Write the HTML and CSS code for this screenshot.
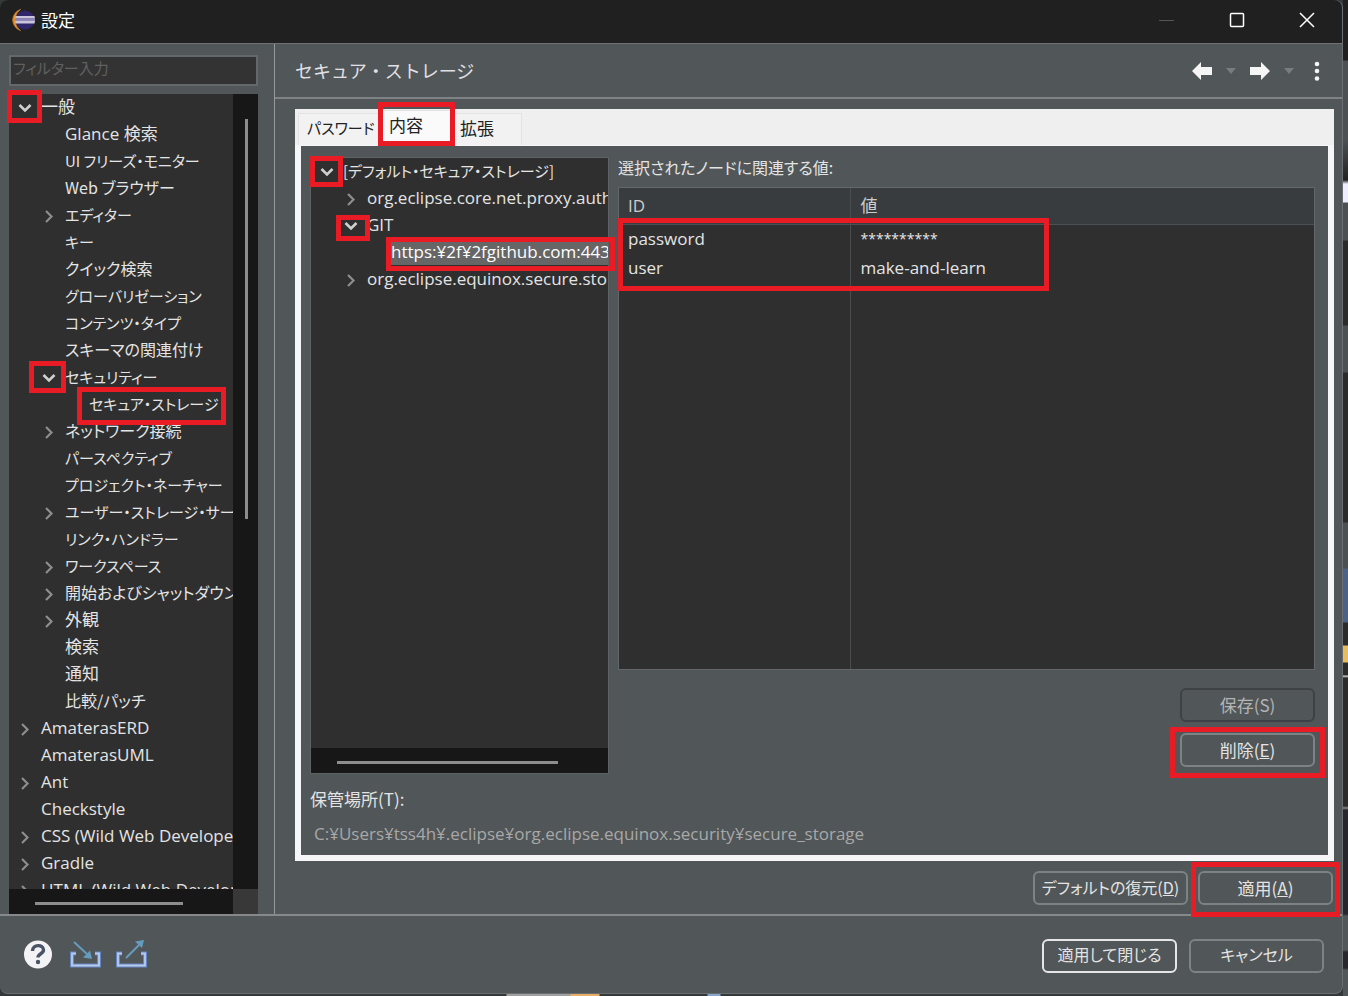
FILE: index.html
```html
<!DOCTYPE html>
<html lang="ja">
<head>
<meta charset="utf-8">
<title>設定</title>
<link rel="stylesheet" href="styles.css">
</head>
<body>
<svg class="defs" aria-hidden="true">
  <symbol id="down" viewBox="0 0 16 16"><path d="M2.500 6 8 11.500l5.500-5.500" fill="none" stroke="#d0d0d0" stroke-width="2.600"/></symbol>
  <symbol id="right" viewBox="0 0 16 16"><path d="M5 4 10.500 9.500 5 15" fill="none" stroke="#8d8d8d" stroke-width="2.200"/></symbol>
</svg>
<div class="dialog">
  <header class="titlebar">
    <svg class="logo" viewBox="0 0 24 24"><path d="M9 1.500A11 11 0 0 0 9 22.500 13 13 0 0 1 9 1.500" fill="#f39a2b" stroke="#b9752c"/><circle cx="13.500" cy="12" r="9.500" fill="#2f2769"/><path d="M4 8h19l.5 2.500H3.500zM3.500 13h20l-.5 2.500H4z" fill="#c9c5dd"/><path d="M3.500 10.500h20V13h-20z" fill="#9089b8"/></svg>
    <h1>設定</h1>
    <div class="winbtns">
      <button aria-label="最小化"><svg viewBox="0 0 16 16"><path d="M0 8.500h15" stroke="#555" fill="none"/></svg></button>
      <button aria-label="最大化"><svg viewBox="0 0 16 16"><rect x="1.500" y="1.500" width="13" height="13" rx="1" stroke="#fff" stroke-width="1.500" fill="none"/></svg></button>
      <button aria-label="閉じる"><svg viewBox="0 0 16 16"><path d="M1 1l14 14M15 1 1 15" stroke="#fff" stroke-width="1.500" fill="none"/></svg></button>
    </div>
  </header>
  <div class="content">
    <aside class="sidebar">
      <input class="filter" type="text" placeholder="フィルター入力" aria-label="フィルター入力">
      <div class="treebox">
        <ul class="tree" role="tree">
          <li><svg><use href="#down"/></svg><span class="lat">一般</span></li>
          <li class="l1"><svg></svg><span class="lat">Glance 検索</span></li>
          <li class="l1"><svg></svg><span class="kana">UI フリーズ・モニター</span></li>
          <li class="l1"><svg></svg>Web ブラウザー</li>
          <li class="l1"><svg><use href="#right"/></svg><span class="kana">エディター</span></li>
          <li class="l1"><svg></svg><span class="kana">キー</span></li>
          <li class="l1"><svg></svg>クイック検索</li>
          <li class="l1"><svg></svg><span class="kana">グローバリゼーション</span></li>
          <li class="l1"><svg></svg><span class="kana">コンテンツ・タイプ</span></li>
          <li class="l1"><svg></svg>スキーマの関連付け</li>
          <li class="l1"><svg><use href="#down"/></svg><span class="kana">セキュリティー</span></li>
          <li class="l2"><svg></svg><span class="kana">セキュア・ストレージ</span></li>
          <li class="l1"><svg><use href="#right"/></svg>ネットワーク接続</li>
          <li class="l1"><svg></svg><span class="kana">パースペクティブ</span></li>
          <li class="l1"><svg></svg><span class="kana">プロジェクト・ネーチャー</span></li>
          <li class="l1"><svg><use href="#right"/></svg><span class="kana">ユーザー・ストレージ・サービス</span></li>
          <li class="l1"><svg></svg><span class="kana">リンク・ハンドラー</span></li>
          <li class="l1"><svg><use href="#right"/></svg><span class="kana">ワークスペース</span></li>
          <li class="l1"><svg><use href="#right"/></svg>開始およびシャットダウン</li>
          <li class="l1"><svg><use href="#right"/></svg><span class="lat">外観</span></li>
          <li class="l1"><svg></svg><span class="lat">検索</span></li>
          <li class="l1"><svg></svg><span class="lat">通知</span></li>
          <li class="l1"><svg></svg>比較/パッチ</li>
          <li><svg><use href="#right"/></svg><span class="lat">AmaterasERD</span></li>
          <li><svg></svg><span class="lat">AmaterasUML</span></li>
          <li><svg><use href="#right"/></svg><span class="lat">Ant</span></li>
          <li><svg></svg><span class="lat">Checkstyle</span></li>
          <li><svg><use href="#right"/></svg><span class="lat">CSS (Wild Web Developer)</span></li>
          <li><svg><use href="#right"/></svg><span class="lat">Gradle</span></li>
          <li><svg><use href="#right"/></svg><span class="lat">HTML (Wild Web Developer)</span></li>
        </ul>
        <div class="vscroll"><i></i></div>
        <div class="hscroll"><i></i></div>
        <div class="corner"></div>
        <b class="mark m-general"></b><b class="mark m-security"></b><b class="mark m-storage"></b>
      </div>
    </aside>
    <main class="page">
      <div class="pagehead">
        <h2>セキュア・ストレージ</h2>
        <div class="nav">
          <button aria-label="戻る"><svg width="22" height="20" viewBox="0 0 22 20"><path d="M1 10 10 1v5h11v8H10v5z" fill="#f5f5f5"/></svg></button>
          <button aria-label="戻る履歴"><svg width="10" height="6" viewBox="0 0 10 6"><path d="M0 0h10L5 6z" fill="#777c7e"/></svg></button>
          <button aria-label="進む"><svg width="22" height="20" viewBox="0 0 22 20"><path d="M21 10 12 1v5H1v8h11v5z" fill="#f5f5f5"/></svg></button>
          <button aria-label="進む履歴"><svg width="10" height="6" viewBox="0 0 10 6"><path d="M0 0h10L5 6z" fill="#777c7e"/></svg></button>
          <button aria-label="メニュー"><svg width="6" height="20" viewBox="0 0 6 20"><g fill="#f5f5f5"><circle cx="3" cy="3" r="2.300"/><circle cx="3" cy="10" r="2.300"/><circle cx="3" cy="17.500" r="2.300"/></g></svg></button>
        </div>
      </div>
      <div class="folder">
        <div class="tabs" role="tablist">
          <button class="tab" role="tab">パスワード</button>
          <button class="tab active" role="tab">内容<b class="mark m-tab"></b></button>
          <button class="tab" role="tab">拡張</button>
        </div>
        <div class="pane">
          <div class="cols">
            <div class="treebox nodes">
              <ul class="tree" role="tree">
                <li><svg><use href="#down"/></svg><span class="kana">[デフォルト・セキュア・ストレージ]</span></li>
                <li class="l1"><svg><use href="#right"/></svg><span class="lat">org.eclipse.core.net.proxy.auth</span></li>
                <li class="l1"><svg><use href="#down"/></svg><span class="lat">GIT</span></li>
                <li class="l2"><svg></svg><span class="lat sel">https:¥2f¥2fgithub.com:443</span></li>
                <li class="l1"><svg><use href="#right"/></svg><span class="lat">org.eclipse.equinox.secure.storage</span></li>
              </ul>
              <div class="hscroll"><i></i></div>
              <b class="mark m-root"></b><b class="mark m-git"></b><b class="mark m-url"></b>
            </div>
            <div class="values">
              <p class="lab">選択されたノードに関連する値:</p>
              <div class="grid">
                <table>
                  <thead><tr><th>ID</th><th>値</th></tr></thead>
                  <tbody>
                    <tr><td>password</td><td class="secret">**********</td></tr>
                    <tr><td>user</td><td>make-and-learn</td></tr>
                    <tr class="fill"><td></td><td></td></tr>
                  </tbody>
                </table>
                <b class="mark m-rows"></b>
              </div>
              <div class="actions">
                <button class="btn big" disabled>保存(S)</button>
                <button class="btn big">削除(<u>E</u>)<b class="mark m-del"></b></button>
              </div>
            </div>
          </div>
          <label class="loclab big" for="loc">保管場所(T):</label>
          <input class="loc" id="loc" type="text" readonly value="C:¥Users¥tss4h¥.eclipse¥org.eclipse.equinox.security¥secure_storage">
        </div>
      </div>
      <div class="pagebtns">
        <button class="btn wide">デフォルトの復元(<u>D</u>)</button>
        <button class="btn big">適用(<u>A</u>)<b class="mark m-apply"></b></button>
      </div>
    </main>
  </div>
  <footer class="footer">
    <button class="ico" aria-label="ヘルプ"><svg width="30" height="30" viewBox="0 0 30 30"><circle cx="15" cy="14.500" r="14" fill="#f3f3f5"/><path d="M9.500 11C9.500 4 20.500 4 20.500 10c0 4-5.500 3.500-5.500 7.500" fill="none" stroke="#4a5468" stroke-width="3.400"/><circle cx="15" cy="22" r="2.200" fill="#4a5468"/></svg></button>
    <button class="ico" aria-label="インポート"><svg width="34" height="30" viewBox="0 0 34 30"><path d="M8 13.500H4v12h27v-12h-4" fill="none" stroke="#6487c4" stroke-width="4"/><path d="M8 13.500H4v12h27v-12h-4" fill="none" stroke="#b8caee" stroke-width="1.800"/><path d="M6 2 19 14" stroke="#659cbd" stroke-width="2"/><path d="M24 19l-9-1.500 7-7z" fill="#659cbd"/></svg></button>
    <button class="ico" aria-label="エクスポート"><svg width="34" height="30" viewBox="0 0 34 30"><path d="M8 13.500H4v12h27v-12h-4" fill="none" stroke="#6487c4" stroke-width="4"/><path d="M8 13.500H4v12h27v-12h-4" fill="none" stroke="#b8caee" stroke-width="1.800"/><path d="M12 18 26 4" stroke="#659cbd" stroke-width="2"/><path d="M30 0l-9 1.500L28 8z" fill="#659cbd"/></svg></button>
    <div class="grow"></div>
    <button class="btn default">適用して閉じる</button>
    <button class="btn">キャンセル</button>
  </footer>
</div>
<div class="behind"></div>
<div class="below"></div>
</body>
</html>
```
FILE: styles.css
```css
* { box-sizing: border-box; }
body {
  margin: 0;
  height: 100vh;
  display: grid;
  grid-template: minmax(0, 1fr) 2px / minmax(0, 1fr) 5px;
  background: #34383a;
  color: #e4e4e4;
  font: 16px/25px "Noto Sans CJK JP", sans-serif;
  font-feature-settings: "palt";
  overflow: hidden;
}
ul, p, h1, h2 { margin: 0; padding: 0; font-weight: 400; }
button, input { font: inherit; font-feature-settings: inherit; color: inherit; }
button { position: relative; padding: 0; border: 0; background: none; white-space: nowrap; }
.defs { position: absolute; width: 0; height: 0; }
.lat { font-family: "Open Sans", "Noto Sans CJK JP", sans-serif; font-size: 17px; }
.kana { font-size: 15px; }
.big { font-size: 17px; }

.dialog {
  display: flex;
  flex-direction: column;
  background: #515658;
  border: solid #6a6e70;
  border-width: 0 1px 1px 0;
  border-radius: 8px;
}
.titlebar {
  display: flex;
  align-items: center;
  height: 44px;
  padding: 0 0 3px 11px;
  background: #202020;
  border-bottom: 1px solid #6e7274;
  border-radius: 8px 8px 0 0;
}
.logo { width: 25px; height: 24px; margin-right: 5px; }
.titlebar h1 { flex: 1; padding-bottom: 2px; color: #fff; font-size: 17px; }
.winbtns { display: flex; }
.winbtns button { width: 70px; height: 40px; display: grid; place-items: center; }
.winbtns svg { width: 16px; height: 16px; }

.content { flex: 1; min-height: 0; display: flex; }
.sidebar {
  flex: none;
  width: 275px;
  display: flex;
  flex-direction: column;
  padding: 11px 16px 0 9px;
  border-right: 1px solid #96999a;
}
.filter {
  width: 100%;
  height: 31px;
  margin-bottom: 8px;
  padding: 0 2px 6px;
  border: 2px solid #64686a;
  background: #333;
  font-size: 15px;
}
.filter::placeholder { color: #606060; opacity: 1; }
.treebox {
  position: relative;
  flex: 1;
  min-height: 0;
  display: grid;
  grid-template: minmax(0, 1fr) 25px / minmax(0, 1fr) 25px;
  background: #171717;
}
.tree { overflow: hidden; background: #2f2f2f; list-style: none; }
.tree li { display: flex; align-items: center; gap: 8px; height: 27px; padding: 0 0 2px 8px; white-space: nowrap; }
.tree .l1 { padding-left: 32px; }
.tree .l2 { padding-left: 56px; }
.tree svg { flex: none; width: 16px; height: 16px; }
.vscroll { padding: 25px 10px 0 12px; }
.vscroll i { display: block; width: 3px; height: 52%; background: #8d8d8d; }
.hscroll { padding: 13px 50px 0 26px; }
.hscroll i { display: block; height: 3px; background: #8d8d8d; }
.corner { background: #383838; }

.page { flex: 1; min-width: 0; display: flex; flex-direction: column; }
.pagehead {
  display: flex;
  align-items: center;
  height: 55px;
  padding: 0 22px 0 20px;
  border-bottom: 2px solid #7e8284;
}
.pagehead h2 { flex: 1; font-size: 18px; font-feature-settings: normal; color: #e0e0e6; }
.nav { display: flex; align-items: center; gap: 13px; }
.nav button { display: grid; place-items: center; }
.nav button:last-child { margin-left: 7px; }

.folder {
  flex: 1;
  min-height: 0;
  display: flex;
  flex-direction: column;
  margin: 10px 8px 0 20px;
  background: #efefef;
}
.tabs { display: flex; align-items: flex-end; height: 36px; padding-left: 3px; }
.tab { height: 32px; padding: 0 8px 5px; color: #222; background: #f2f2f2; border: solid #e3e3e3; border-width: 1px 1px 0; text-align: left; }
.tab.active { z-index: 1; height: 35px; width: 71px; padding-bottom: 8px; background: #fafafa; font-size: 17px; }
.tab:first-child { width: 82px; font-size: 15px; }
.tab:last-child { width: 71px; font-size: 17px; }
.pane {
  flex: 1;
  min-height: 0;
  display: flex;
  flex-direction: column;
  background: #515658;
  border: 6px solid #f6f6f8;
  border-top-width: 1px;
  padding: 11px 13px 8px 9px;
}
.cols { flex: 1; min-height: 0; display: flex; gap: 9px; }
.treebox.nodes { flex: none; width: 299px; grid-template: minmax(0, 1fr) 25px / minmax(0, 1fr); border: 1px solid #5e6264; }
.sel { padding: 1px 2px; margin-left: -2px; background: #666; color: #fff; }
.values { flex: 1; min-width: 0; display: flex; flex-direction: column; }
.lab { line-height: 20px; margin-bottom: 10px; }
.grid { position: relative; flex: 1; min-height: 0; border: 1px solid #62676a; background: #2f2f2f; }
table { width: 100%; height: 100%; border-collapse: collapse; font-family: "Open Sans", "Noto Sans CJK JP", sans-serif; font-size: 17px; }
th, td { height: 29px; padding: 0 10px; text-align: left; font-weight: 400; }
td { padding: 0 10px 1px; }
th { height: 36px; background: #383c3e; border-bottom: 1px solid #4c5052; color: #ccc; }
th:first-child, td:first-child { width: 231px; padding-left: 9px; border-right: 1px solid #4a4e50; }
.secret { font-size: 14px; }
.fill td { height: auto; }
.actions { display: flex; flex-direction: column; align-items: flex-end; gap: 11px; padding: 18px 0 7px; }
.btn { width: 135px; height: 34px; padding-bottom: 2px; border: 2px solid #7d8284; border-radius: 6px; color: #e4e4e4; }
.btn:disabled { border-color: #3e4244; color: #b4b4b4; }
.btn.wide { width: 155px; }
.btn.default { border-color: #e6e6e6; }
.loclab { margin-top: 12px; }
.loc { width: 100%; height: 27px; margin-top: 9px; padding: 0 4px; border: 0; background: none; color: #a8a8a8; font-family: "Open Sans", sans-serif; font-size: 17px; }
.pagebtns { display: flex; justify-content: flex-end; gap: 10px; padding: 10px 9px 9px; }

.footer { display: flex; align-items: center; height: 79px; padding: 2px 18px 0 23px; gap: 12px; border-top: 2px solid #85898a; }
.ico { display: grid; margin: 0 3px 2px 0; }
.ico + .ico { margin-right: 0; }
.grow { flex: 1; }

.behind { grid-row: 1 / 3; grid-column: 2; background: linear-gradient(#202020 60px, #4c5052 61px 140px, #222 180px, #eef 184px 202px, #4c5052 203px 240px, #2b2b2b 241px 325px, #4c5052 326px 372px, #2b2b2b 373px 522px, #4c5052 523px 568px, #4b6288 569px 622px, #2b2b2b 623px 645px, #e8bc58 646px 662px, #2b2b2b 663px 675px, #ddd 676px, #2b2b2b 678px 806px, #888 808px, #26262c 810px 914px, #515658 916px 950px, #26262c 952px 968px, #515658 970px); }
.below { grid-row: 2; grid-column: 1; background: linear-gradient(90deg, transparent 506px, #a0a0a0 507px 570px, #e8ad66 571px 599px, transparent 600px 707px, #88a5cc 708px 720px, transparent 721px); }

.mark { position: absolute; border: 5px solid #e91c25; pointer-events: none; }
.m-general { left: -2px; top: -4px; width: 35px; height: 33px; }
.m-security { left: 20px; top: 267px; width: 37px; height: 32px; }
.m-storage { left: 68px; top: 293px; width: 149px; height: 38px; }
.m-tab { left: -3px; top: -9px; width: 77px; height: 44px; }
.m-root { left: -1px; top: -2px; width: 33px; height: 31px; }
.m-git { left: 25px; top: 57px; width: 34px; height: 26px; }
.m-url { left: 75px; top: 79px; width: 229px; height: 34px; }
.m-rows { left: -1px; top: 30px; width: 431px; height: 73px; }
.m-del { left: -12px; top: -8px; width: 155px; height: 51px; }
.m-apply { left: -9px; top: -11px; width: 149px; height: 55px; }
```
